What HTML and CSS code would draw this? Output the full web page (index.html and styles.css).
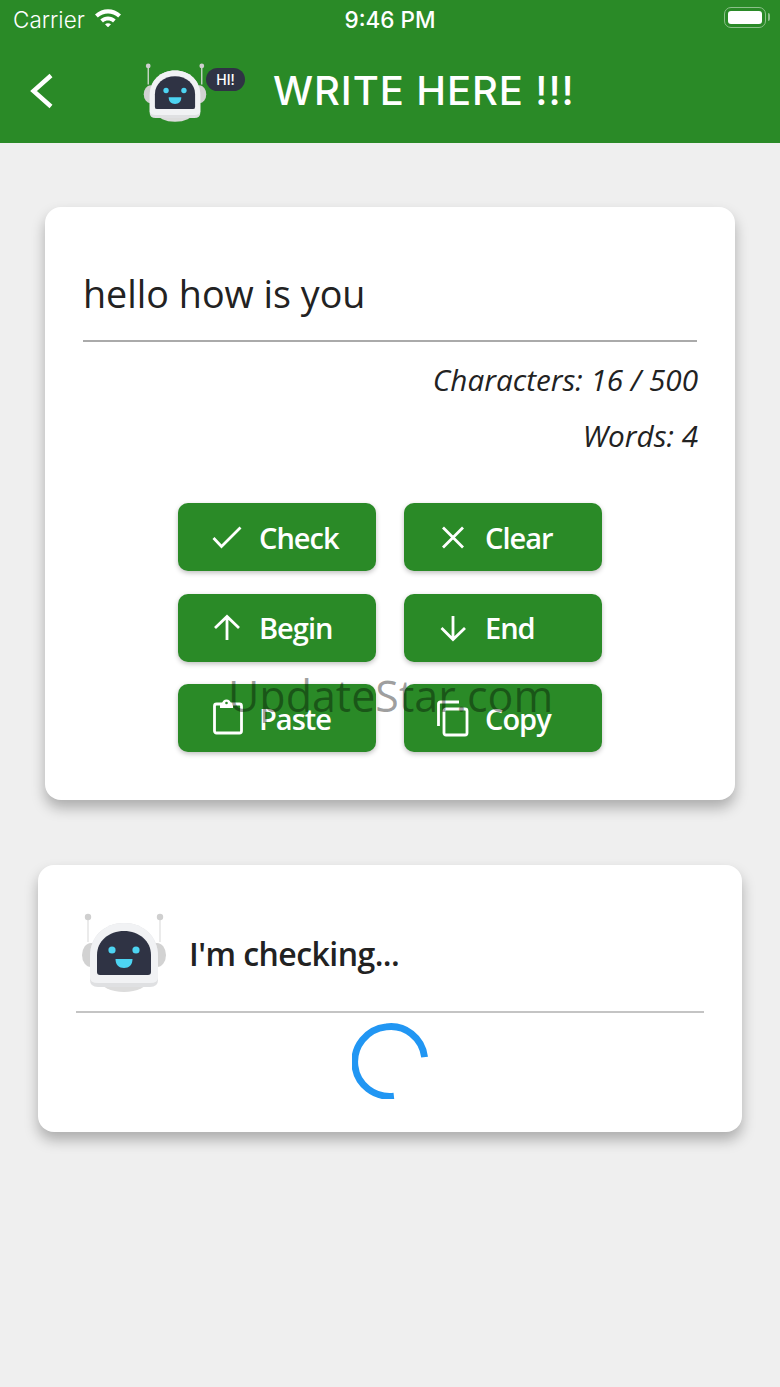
FILE: index.html
```html
<!DOCTYPE html>
<html lang="en">
<head>
    <meta charset="UTF-8">
    <meta name="viewport" content="width=device-width, initial-scale=1.0">
    <title>Write Here</title>
    <link rel="stylesheet" href="styles.css">
</head>

<body>
    <svg class="defs" width="0" height="0" aria-hidden="true">
        <symbol id="robot" viewBox="0 0 86 80">
            <path d="M7 5V30M79 5V30" stroke="#e6e6e6" stroke-width="1.6" fill="none"/>
            <circle cx="7" cy="5" r="3.2" fill="#cfcfcf"/>
            <circle cx="79" cy="5" r="3.2" fill="#cfcfcf"/>
            <ellipse cx="10" cy="43" rx="9" ry="12" fill="#d2d2d2"/>
            <ellipse cx="76" cy="43" rx="9" ry="12" fill="#d2d2d2"/>
            <ellipse cx="43" cy="68" rx="24" ry="12" fill="#dcdcdc"/>
            <path d="M9 68V44C9 24 24 11 43 11S77 24 77 44V68Q77 75 69 75H17Q9 75 9 68Z" fill="#dfe0e2"/>
            <path d="M9 66V44C9 24 24 11 43 11S77 24 77 44V66Q77 71 69 71H17Q9 71 9 66Z" fill="#f1f2f4"/>
            <path d="M16 60V43C16 29 28 19 43 19S70 29 70 43V60Q70 63 67 63H19Q16 63 16 60Z" fill="#2f3344"/>
            <circle cx="31" cy="38" r="3.6" fill="#4dd4f2"/>
            <circle cx="55" cy="38" r="3.6" fill="#4dd4f2"/>
            <path d="M34.500 47H51.500C51.500 53 48 56 43 56S34.500 53 34.500 47Z" fill="#4dd4f2"/>
        </symbol>
    </svg>

    <header class="app-header">
        <div class="status-bar">
            <div class="status-left">
                <span>Carrier</span>
                <svg class="wifi" viewBox="0 0 28 20">
                    <path d="M1 7.500C8.500 .5 19.500 .5 27 7.500L24.200 10.500C18.300 5 9.700 5 3.800 10.500Z" fill="#fff"/>
                    <path d="M6.300 12.600C10.800 8.600 17.200 8.600 21.700 12.600L19 15.400C16 12.900 12 12.900 9 15.400Z" fill="#fff"/>
                    <path d="M11 17.300C12.800 15.900 15.200 15.900 17 17.300L14 20.300Z" fill="#fff"/>
                </svg>
            </div>
            <span class="status-time">9:46 PM</span>
            <div class="battery"><div class="battery-level"></div></div>
        </div>
        <nav class="nav-bar">
            <svg class="back" viewBox="0 0 24 36">
                <path d="M21 2.500L3.500 18L21 33.500" stroke="#fff" stroke-width="4.400" fill="none"/>
            </svg>
            <div class="logo">
                <svg class="logo-robot"><use href="#robot"/></svg>
                <span class="hi-bubble">HI!</span>
            </div>
            <h1>WRITE HERE !!!</h1>
        </nav>
    </header>

    <main>
        <section class="card editor">
            <div class="input-text">hello how is you</div>
            <p class="counter">Characters: 16 / 500</p>
            <p class="counter">Words: 4</p>

            <div class="buttons">
                <button type="button">
                    <svg class="icon" viewBox="0 0 32 32"><path d="M2.500 17L10.500 25.500L29.500 6.500"/></svg>
                    Check
                </button>
                <button type="button">
                    <svg class="icon" viewBox="0 0 32 32"><path d="M6 6.500L26 26.500M26 6.500L6 26.500"/></svg>
                    Clear
                </button>
                <button type="button">
                    <svg class="icon" viewBox="0 0 32 32"><path d="M16 28V5M4 16L16 4.500L28 16"/></svg>
                    Begin
                </button>
                <button type="button">
                    <svg class="icon" viewBox="0 0 32 32"><path d="M16 4V27M4.500 16L16 27.500L28 16"/></svg>
                    End
                </button>
                <button type="button">
                    <svg class="icon" viewBox="0 0 32 32">
                        <rect x="3.500" y="2" width="27" height="29" rx="2"/>
                        <path class="icon-fill" d="M9 6H22V2H20A4.500 4.500 0 0 0 11 2H9Z"/>
                        <circle class="icon-hole" cx="15.500" cy="1" r="1.300"/>
                    </svg>
                    Paste
                </button>
                <button type="button">
                    <svg class="icon" viewBox="0 0 32 32"><path d="M1.500 24V2Q1.500 0 3.500 0H22"/><rect x="7" y="7" width="23" height="26" rx="2"/></svg>
                    Copy
                </button>
            </div>
        </section>

        <section class="card result">
            <div class="result-head">
                <svg class="result-robot"><use href="#robot"/></svg>
                <h2>I'm checking...</h2>
            </div>
            <div class="spinner-row">
                <svg class="spinner" viewBox="0 0 78 78">
                    <path d="M74.500 35A36 36 0 1 0 43 75" stroke="#2196f3" stroke-width="7" fill="none"/>
                </svg>
            </div>
        </section>
    </main>

    <div class="watermark">UpdateStar.com</div>
</body>
</html>
```

FILE: styles.css
```css
/* General Reset */
* {
    margin: 0;
    padding: 0;
    box-sizing: border-box;
}

body {
    position: relative;
    min-height: 1387px;
    background-color: #efefef;
    color: #222;
    font-family: 'Open Sans', sans-serif;
}

.defs {
    position: absolute;
}

/* Header */
.app-header {
    height: 143px;
    background: #2a8a27;
    color: white;
    font-family: 'Inter', sans-serif;
}

.status-bar {
    display: flex;
    align-items: center;
    justify-content: space-between;
    position: relative;
    height: 40px;
    padding: 0 14px 2px 13px;
    font-size: 22.500px;
}

.status-left {
    display: flex;
    align-items: center;
    gap: 9px;
    font-weight: 300;
}

.wifi {
    width: 28px;
    height: 20px;
    margin-top: -5px;
}

.status-time {
    position: absolute;
    left: 0;
    right: 0;
    text-align: center;
    font-weight: 500;
}

.battery {
    position: relative;
    width: 42px;
    height: 21px;
    padding: 3px;
    border: 1.500px solid #8cc08a;
    border-radius: 7px;
    margin-top: -3px;
}

.battery::after {
    content: "";
    position: absolute;
    right: -5px;
    top: 5px;
    width: 2px;
    height: 8px;
    background: #8cc08a;
    border-radius: 0 2px 2px 0;
}

.battery-level {
    height: 100%;
    background: white;
    border-radius: 3px;
}

.nav-bar {
    display: flex;
    align-items: center;
    height: 103px;
    padding-left: 30px;
}

.back {
    width: 24px;
    height: 36px;
    margin-top: -1px;
}

.logo {
    position: relative;
    width: 102px;
    height: 60px;
    margin-left: 89px;
}

.logo-robot {
    width: 64px;
    height: 60px;
}

.hi-bubble {
    position: absolute;
    left: 63px;
    top: 6px;
    width: 39px;
    height: 23px;
    border-radius: 12px;
    background: #2f3344;
    color: white;
    font-size: 14px;
    font-weight: 500;
    line-height: 23px;
    text-align: center;
}

.app-header h1 {
    margin-left: 28px;
    margin-top: -2px;
    font-size: 40px;
    font-weight: 500;
    letter-spacing: 0.9px;
    white-space: nowrap;
}

/* Cards */
.card {
    background: white;
    border-radius: 16px;
    box-shadow: 0 8px 14px rgba(0, 0, 0, 0.28);
}

.editor {
    height: 593px;
    margin: 64px 45px 0;
    padding: 60px 38px 0;
}

.input-text {
    height: 75px;
    margin-bottom: 19px;
    border-bottom: 2px solid #aaa;
    font-size: 37.700px;
    line-height: 54px;
}

.counter {
    margin-top: 18px;
    margin-right: -1px;
    font-size: 29.700px;
    font-style: italic;
    line-height: 38px;
    text-align: right;
}

/* Buttons */
.buttons {
    display: grid;
    grid-template-columns: 198px 198px;
    justify-content: center;
    gap: 22.500px 28px;
    margin-top: 48px;
}

button {
    display: flex;
    align-items: center;
    gap: 16px;
    height: 68px;
    padding-left: 33px;
    background: #2a8a27;
    color: white;
    border: none;
    border-radius: 10px;
    box-shadow: 0 2px 5px rgba(0, 0, 0, 0.25);
    font-family: 'Open Sans', sans-serif;
    font-size: 29px;
    font-weight: 600;
    letter-spacing: -1px;
}

.icon {
    width: 32px;
    height: 32px;
    flex-shrink: 0;
    overflow: visible;
    fill: none;
    stroke: white;
    stroke-width: 2.800;
}

.icon-fill {
    fill: white;
    stroke: none;
}

.icon-hole {
    fill: #2a8a27;
    stroke: none;
}

/* Result card */
.result {
    height: 267px;
    margin: 65px 38px 0;
    padding: 47px 38px 0;
}

.result-head {
    display: flex;
    align-items: center;
    gap: 22px;
    height: 101px;
    padding-left: 5px;
    padding-bottom: 21px;
    border-bottom: 2px solid #c4c4c4;
}

.result-robot {
    width: 86px;
    height: 80px;
    margin-top: 2px;
    flex-shrink: 0;
}

.result-head h2 {
    margin-top: 5px;
    font-size: 32px;
    font-weight: 600;
    letter-spacing: -0.55px;
}

.spinner-row {
    display: flex;
    justify-content: center;
    padding-top: 10px;
}

.spinner {
    width: 76px;
    height: 76px;
}

/* Watermark over the buttons */
.watermark {
    position: absolute;
    left: 228px;
    top: 666px;
    font-size: 43px;
    color: rgba(0, 0, 0, 0.38);
    white-space: nowrap;
}
```
